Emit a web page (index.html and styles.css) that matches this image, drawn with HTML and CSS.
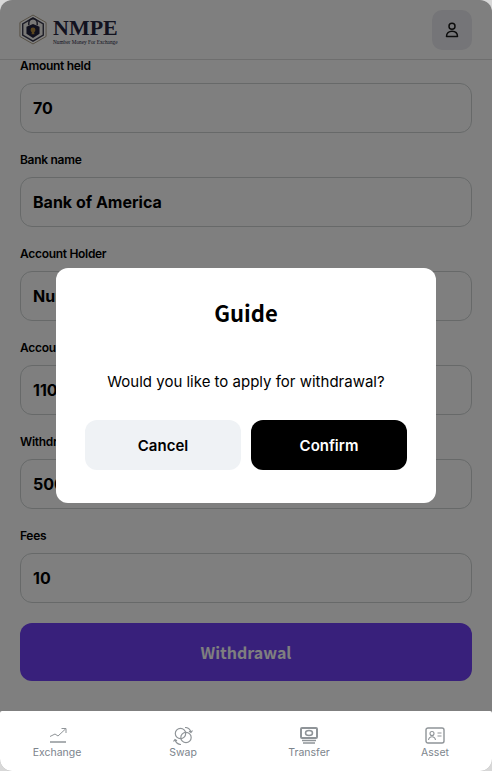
FILE: index.html
```html
<!DOCTYPE html>
<html lang="en">
<head>
    <meta charset="UTF-8">
    <meta name="viewport" content="width=device-width, initial-scale=1.0">
    <title>NMPE Withdrawal</title>
    <link rel="stylesheet" href="styles.css">
</head>
<body>
    <div class="app">
        <header class="top-bar">
            <div class="logo">
                <svg class="logo-mark" width="28" height="33" viewBox="0 0 30 33">
                    <path d="M15 1 L29 9 V24 L15 32 L1 24 V9 Z" fill="none" stroke="#a89a80" stroke-width="1"/>
                    <path d="M15 4 L26 10.5 V22.5 L15 29 L4 22.5 V10.5 Z" fill="#f4f2ee" stroke="#39394c" stroke-width="1.5"/>
                    <path d="M10.5 12 V9.5 a4.500 4.500 0 0 1 9 0 V12" fill="none" stroke="#2c2c40" stroke-width="1.5"/>
                    <path d="M15 10.500 L22 13.500 V21 L15 25.500 L8 21 V13.500 Z" fill="#20203a"/>
                    <circle cx="15" cy="17" r="2.600" fill="#b58a3c"/>
                    <path d="M14 18 h2 l.6 3.500 h-3.200 Z" fill="#b58a3c"/>
                </svg>
                <div class="logo-text">
                    <span class="logo-name">NMPE</span>
                    <span class="logo-tag">Number Money For Exchange</span>
                </div>
            </div>
            <button class="user-btn">
                <svg width="16" height="16" viewBox="0 0 16 16" fill="none" stroke="#1a1a1a" stroke-width="1.500">
                    <circle cx="8" cy="4.200" r="3"/>
                    <path d="M2.500 14.500 c0-3.500 2.400-5.300 5.500-5.300 s5.500 1.800 5.500 5.300 Z" stroke-linejoin="round"/>
                </svg>
            </button>
        </header>

        <div class="form">
            <div class="field">
                <label>Amount held</label>
                <input type="text" value="70" readonly>
            </div>
            <div class="field">
                <label>Bank name</label>
                <input type="text" value="Bank of America" readonly>
            </div>
            <div class="field">
                <label>Account Holder</label>
                <input type="text" value="Number Money" readonly>
            </div>
            <div class="field">
                <label>Account Number</label>
                <input type="text" value="1100234567" readonly>
            </div>
            <div class="field">
                <label>Withdrawal amount</label>
                <input type="text" value="500" readonly>
            </div>
            <div class="field">
                <label>Fees</label>
                <input type="text" value="10" readonly>
            </div>
            <button class="submit-btn">Withdrawal</button>
        </div>

        <nav class="bottom-nav">
            <a class="nav-item">
                <svg width="20" height="18" viewBox="0 0 20 18" fill="none" stroke="#8f9498" stroke-width="1">
                    <path d="M3 9.500 L8 7 L11 9 L18.500 2"/>
                    <path d="M14.500 1.500 H19 V6"/>
                    <path d="M3 15 H19" stroke-width="1.600"/>
                </svg>
                <span>Exchange</span>
            </a>
            <a class="nav-item">
                <svg width="20" height="18" viewBox="0 0 20 18" fill="none" stroke="#8f9498" stroke-width="1.200">
                    <circle cx="7.500" cy="6.500" r="5.200"/>
                    <circle cx="13" cy="10.500" r="5.200"/>
                    <path d="M12 .5 C14.800 .5 17 2.300 18 5 M16 4.200 L18 5.500 L19.500 3.500"/>
                    <path d="M8 17.500 C5.200 17.500 3 15.700 2 13 M4 13.800 L2 12.500 L.5 14.500"/>
                </svg>
                <span>Swap</span>
            </a>
            <a class="nav-item">
                <svg width="20" height="18" viewBox="0 0 20 18" fill="none" stroke="#8f9498">
                    <rect x="2" y="1" width="16" height="10" rx="1" stroke-width="2"/>
                    <ellipse cx="10" cy="6" rx="3.500" ry="2.500" stroke-width="1.500"/>
                    <path d="M3 13.500 H17 M4 16 H16" stroke-width="1.300"/>
                </svg>
                <span>Transfer</span>
            </a>
            <a class="nav-item">
                <svg width="20" height="18" viewBox="0 0 20 18" fill="none" stroke="#8f9498" stroke-width="1.100">
                    <rect x="1" y="1" width="18" height="15" rx="2" stroke-width="1.400"/>
                    <circle cx="7" cy="6.500" r="2"/>
                    <path d="M3.500 13 c.5-2.500 2-3.300 3.500-3.300 s3 .8 3.500 3.300"/>
                    <path d="M12.500 6 H16.500 M12.500 9 H16.500"/>
                </svg>
                <span>Asset</span>
            </a>
        </nav>

        <div class="overlay">
            <div class="modal">
                <h2 class="modal-title">Guide</h2>
                <p class="modal-text">Would you like to apply for withdrawal?</p>
                <div class="modal-actions">
                    <button class="btn-cancel">Cancel</button>
                    <button class="btn-confirm">Confirm</button>
                </div>
            </div>
        </div>
    </div>
</body>
</html>
```

FILE: styles.css
```css
* {
    box-sizing: border-box;
}

html, body {
    margin: 0;
    padding: 0;
    height: 100%;
    overflow: hidden;
    background-color: #d8d8d8;
}

body {
    font-family: Inter, "Liberation Sans", Arial, sans-serif;
}

.app {
    position: relative;
    display: flex;
    flex-direction: column;
    height: 771px;
    background-color: white;
    border-radius: 12px;
    overflow: hidden;
}

.top-bar {
    display: flex;
    justify-content: space-between;
    align-items: center;
    height: 60px;
    margin-bottom: -1px;
    flex-shrink: 0;
    padding: 0 20px 0 19px;
    border-bottom: 1px solid #dcdcdc;
}

.logo {
    display: flex;
    align-items: center;
    gap: 6px;
}

.logo-text {
    display: flex;
    flex-direction: column;
}

.logo-name {
    font-family: "Liberation Serif", serif;
    font-weight: bold;
    font-size: 22px;
    line-height: 24px;
    color: #24243f;
}

.logo-tag {
    font-family: "Liberation Serif", serif;
    font-size: 5.3px;
    line-height: 4px;
    white-space: nowrap;
    color: #24243f;
}

.user-btn {
    display: flex;
    align-items: center;
    justify-content: center;
    width: 40px;
    height: 40px;
    padding: 0;
    border: none;
    border-radius: 10px;
    background-color: #ebebf0;
}

.form {
    flex: 1;
    min-height: 0;
    padding: 0 20px;
    overflow: hidden;
}

.field {
    margin-bottom: 20px;
}

.field label {
    display: block;
    height: 14px;
    margin-bottom: 10px;
    font-size: 12px;
    line-height: 14px;
    font-weight: 600;
    letter-spacing: -0.3px;
    color: black;
}

.field input {
    display: block;
    width: 100%;
    height: 50px;
    padding: 0 12px;
    border: 1px solid #ced3d3;
    border-radius: 12px;
    background: transparent;
    font-family: Inter, sans-serif;
    font-size: 16px;
    font-weight: bold;
    color: black;
    outline: none;
}

.submit-btn {
    display: block;
    width: 100%;
    height: 58px;
    border: none;
    border-radius: 12px;
    background-color: #7040f6;
    font-family: "Noto Sans CJK KR", "Noto Sans", sans-serif;
    font-size: 16px;
    font-weight: bold;
    color: white;
}

.bottom-nav {
    position: relative;
    z-index: 20;
    display: flex;
    justify-content: space-between;
    height: 60px;
    flex-shrink: 0;
    padding: 16px 7px 0;
    background-color: white;
    border-radius: 2px 2px 0 0;
}

.nav-item {
    display: flex;
    flex-direction: column;
    align-items: center;
    width: 100px;
    gap: 1px;
    font-size: 10.5px;
    line-height: 14px;
    color: #7c848c;
}

.overlay {
    position: absolute;
    top: 0;
    left: 0;
    right: 0;
    bottom: 0;
    z-index: 10;
    display: flex;
    align-items: center;
    justify-content: center;
    background-color: rgba(0, 0, 0, 0.5);
}

.modal {
    width: 380px;
    height: 235px;
    padding: 27px 29px 0;
    background-color: white;
    border-radius: 12px;
    text-align: center;
}

.modal-title {
    margin: 0;
    font-family: "Noto Sans CJK KR", "Noto Sans", sans-serif;
    font-size: 22px;
    line-height: 34px;
    font-weight: bold;
    color: black;
}

.modal-text {
    margin: 41px 0 0;
    font-size: 15px;
    line-height: 24px;
    color: black;
}

.modal-actions {
    display: flex;
    gap: 10px;
    margin-top: 26px;
}

.modal-actions button {
    flex: 1;
    height: 50px;
    border: none;
    border-radius: 12px;
    font-family: Inter, sans-serif;
    font-size: 15px;
    font-weight: 600;
}

.btn-cancel {
    background-color: #eff2f5;
    color: black;
    font-weight: 500;
}

.btn-confirm {
    background-color: black;
    color: white;
}
```
